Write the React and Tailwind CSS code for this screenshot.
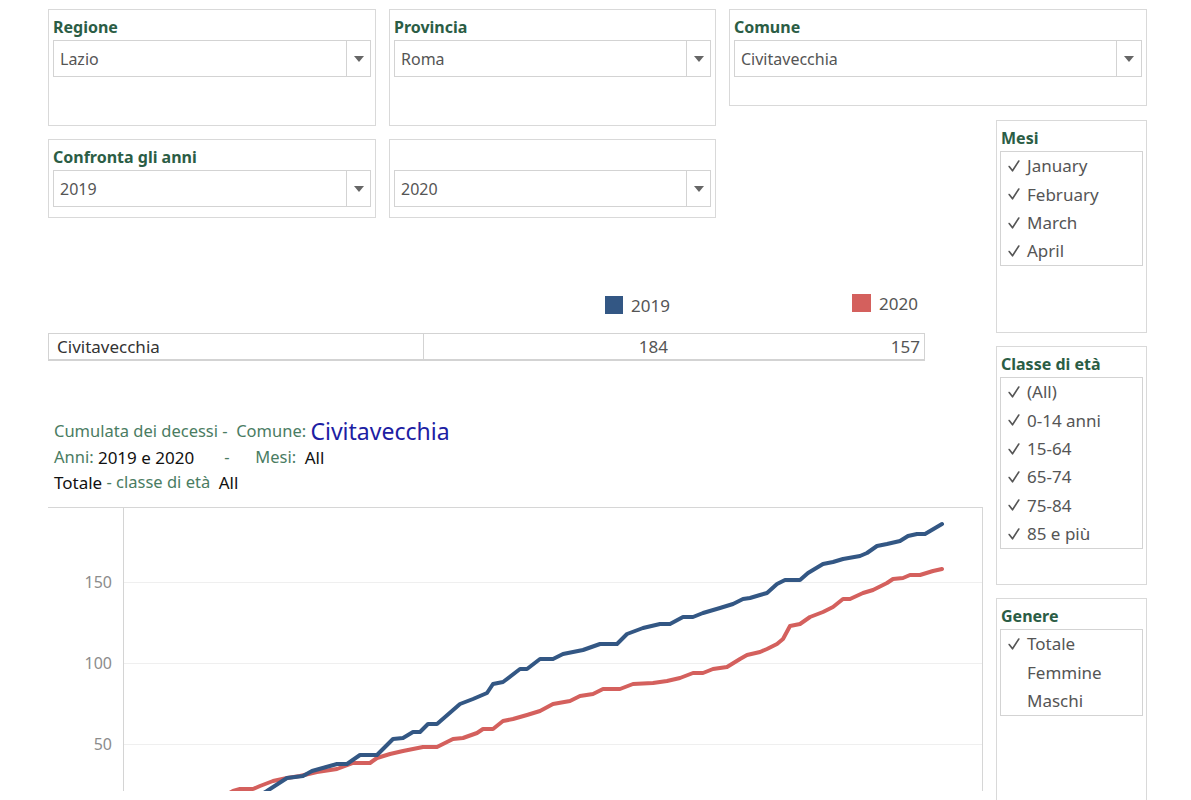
import React from 'react'

const font = { fontFamily: '"Noto Sans", "Open Sans", Arial, sans-serif' }

const blue = [
  [250, 800], [267, 790], [287, 777], [303, 775], [312, 770], [337, 763], [347, 763], [360, 754], [377, 754],
  [393, 738], [403, 737], [413, 731], [420, 731], [428, 723], [437, 723], [460, 703], [473, 698], [487, 692],
  [493, 683], [503, 681], [520, 668], [527, 668], [540, 658], [553, 658], [563, 653], [583, 649], [600, 643],
  [617, 643], [627, 633], [643, 627], [660, 623], [670, 623], [683, 616], [693, 616], [703, 612], [720, 607],
  [733, 603], [743, 598], [750, 597], [760, 594], [767, 592], [777, 583], [785, 579], [800, 579], [808, 572],
  [823, 563], [833, 561], [843, 558], [860, 555], [867, 552], [877, 545], [887, 543], [900, 540], [908, 535],
  [917, 533], [925, 533], [942, 523],
]

const red = [
  [215, 800], [233, 790], [240, 788], [253, 788], [260, 785], [273, 780], [287, 777], [300, 775], [317, 771],
  [337, 768], [353, 762], [370, 762], [377, 757], [390, 753], [403, 750], [423, 746], [437, 746], [453, 738],
  [463, 737], [477, 732], [483, 728], [493, 728], [503, 720], [513, 718], [527, 714], [540, 710], [553, 703],
  [570, 700], [580, 695], [593, 693], [603, 688], [620, 688], [633, 683], [653, 682], [667, 680], [680, 677],
  [693, 672], [703, 672], [713, 668], [727, 666], [740, 658], [747, 654], [760, 651], [767, 648], [777, 643],
  [783, 638], [790, 625], [800, 623], [810, 616], [823, 611], [833, 606], [843, 598], [850, 598], [863, 592],
  [873, 589], [887, 582], [893, 578], [903, 577], [910, 574], [920, 574], [933, 570], [942, 568],
]

const toPoints = (pts) => pts.map(([x, y]) => `${x},${y}`).join(' ')

function Arrow() {
  return (
    <svg width="10" height="6" viewBox="0 0 10 6">
      <polygon points="0,0 10,0 5,6" fill="#666" />
    </svg>
  )
}

function Check() {
  return (
    <svg width="12" height="12" viewBox="0 0 12 12">
      <polyline points="1.2,6.5 4.5,10.8 10.8,1" fill="none" stroke="#555" strokeWidth="1.6" strokeLinecap="round" strokeLinejoin="round" />
    </svg>
  )
}

function Dropdown({ value, arrowW = 'w-[24px]' }) {
  return (
    <div className="flex h-[37px] border border-[#d3d3d3] bg-white">
      <div className="flex flex-1 items-center pl-[6px] text-[16px] text-[#555]">{value}</div>
      <div className={`${arrowW} flex items-center justify-center border-l border-[#d3d3d3]`}>
        <Arrow />
      </div>
    </div>
  )
}

function Label({ children }) {
  return <div className="h-[30px] pt-[7px] text-[16px] font-bold leading-[20px] text-[#2b5d45]">{children}</div>
}

function CheckList({ title, items, boxH }) {
  return (
    <div className={`${boxH} border border-[#d9d9d9] bg-white px-[3px]`}>
      <Label>
        <span className="pl-[1px]">{title}</span>
      </Label>
      <div className="border border-[#d3d3d3]">
        {items.map(([checked, text]) => (
          <div key={text} className="flex h-[28.3px] items-center pl-[7px] text-[17px] text-[#555]">
            <span className="flex w-[19px] items-center">{checked && <Check />}</span>
            <span>{text}</span>
          </div>
        ))}
      </div>
    </div>
  )
}

export default function App() {
  return (
    <div className="min-h-screen overflow-hidden bg-white pl-[48px] pt-[9px]" style={font}>
      <div className="flex items-start">
        {/* left column */}
        <div className="w-[935px] shrink-0">
          <div className="flex items-start gap-[13px]">
            <div className="h-[117px] w-[328px] shrink-0 border border-[#d9d9d9] px-[4px]">
              <Label>Regione</Label>
              <Dropdown value="Lazio" />
            </div>
            <div className="h-[117px] w-[327px] shrink-0 border border-[#d9d9d9] px-[4px]">
              <Label>Provincia</Label>
              <Dropdown value="Roma" />
            </div>
            <div className="h-[97px] w-[418px] shrink-0 border border-[#d9d9d9] px-[4px]">
              <Label>Comune</Label>
              <Dropdown value="Civitavecchia" arrowW="w-[25px]" />
            </div>
          </div>

          <div className="mt-[13px] flex items-start gap-[13px]">
            <div className="h-[79px] w-[328px] shrink-0 border border-[#d9d9d9] px-[4px]">
              <Label>Confronta gli anni</Label>
              <Dropdown value="2019" />
            </div>
            <div className="h-[79px] w-[327px] shrink-0 border border-[#d9d9d9] px-[4px] pt-[30px]">
              <Dropdown value="2020" />
            </div>
          </div>

          {/* legend */}
          <div className="mt-[75px] grid h-[24px] w-[877px] grid-cols-[375px_250px_252px] text-[17px] text-[#555]">
            <div />
            <div className="flex items-start justify-end gap-[8px] pr-[3px] pt-[3px]">
              <span className="h-[18px] w-[18px] bg-[#335784]" />
              <span className="leading-[20px]">2019</span>
            </div>
            <div className="flex items-start justify-end gap-[8px] pr-[7px] pt-[1px]">
              <span className="h-[18px] w-[19px] bg-[#d4605d]" />
              <span className="leading-[20px]">2020</span>
            </div>
          </div>

          {/* table */}
          <div className="mt-[16px] grid h-[28px] w-[877px] grid-cols-[375px_250px_252px] border border-b-2 border-[#d3d3d3] text-[17px] text-[#333]">
            <div className="flex items-center border-r border-[#d3d3d3] pl-[8px]">Civitavecchia</div>
            <div className="flex items-center justify-end pr-[6px] text-[#555]">184</div>
            <div className="flex items-center justify-end pr-[6px] text-[#555]">157</div>
          </div>

          {/* title */}
          <div className="mt-[56px] pl-[6px] text-[16.5px]">
            <div className="flex h-[28px] items-center text-[#4a7c62]">
              <span>Cumulata dei decessi -&nbsp;&nbsp;Comune:&nbsp;</span>
              <span className="text-[23px] text-[#1c20a3]">Civitavecchia</span>
            </div>
            <div className="flex h-[25px] items-center whitespace-pre">
              <span className="text-[#4a7c62]">Anni: </span>
              <span className="text-[17px] text-[#111]">2019 e 2020</span>
              <span className="text-[#4a7c62]">{'       -      Mesi:  '}</span>
              <span className="text-[17px] text-[#111]">All</span>
            </div>
            <div className="flex h-[25px] items-center whitespace-pre">
              <span className="text-[17px] text-[#111]">Totale</span>
              <span className="text-[#4a7c62]">{' - classe di età  '}</span>
              <span className="text-[17px] text-[#111]">All</span>
            </div>
          </div>

          {/* chart */}
          <div className="mt-[12px] h-[284px] w-[935px] border-r border-t border-[#d6d6d6]">
            <svg width="934" height="283" viewBox="48 507 934 283" className="block">
              <line x1="123.5" y1="507" x2="123.5" y2="790" stroke="#d4d4d4" strokeWidth="1" />
              {[581, 662, 743].map((y) => (
                <line key={y} x1="124" y1={y + 0.5} x2="982" y2={y + 0.5} stroke="#efefef" strokeWidth="1" />
              ))}
              {[
                [581, '150'],
                [662, '100'],
                [743, '50'],
              ].map(([y, t]) => (
                <text key={t} x="112" y={y + 6} textAnchor="end" fontSize="16" fill="#8c8c8c" style={font}>
                  {t}
                </text>
              ))}
              <polyline points={toPoints(red)} fill="none" stroke="#d4605d" strokeWidth="4" strokeLinejoin="round" strokeLinecap="round" />
              <polyline points={toPoints(blue)} fill="none" stroke="#335784" strokeWidth="4" strokeLinejoin="round" strokeLinecap="round" />
            </svg>
          </div>
        </div>

        {/* right column */}
        <div className="ml-[13px] flex w-[151px] shrink-0 flex-col gap-[13px] pt-[111px]">
          <CheckList
            title="Mesi"
            boxH="h-[213px]"
            items={[
              [true, 'January'],
              [true, 'February'],
              [true, 'March'],
              [true, 'April'],
            ]}
          />
          <CheckList
            title="Classe di età"
            boxH="h-[239px]"
            items={[
              [true, '(All)'],
              [true, '0-14 anni'],
              [true, '15-64'],
              [true, '65-74'],
              [true, '75-84'],
              [true, '85 e più'],
            ]}
          />
          <CheckList
            title="Genere"
            boxH="h-[230px]"
            items={[
              [true, 'Totale'],
              [false, 'Femmine'],
              [false, 'Maschi'],
            ]}
          />
        </div>
      </div>
    </div>
  )
}
